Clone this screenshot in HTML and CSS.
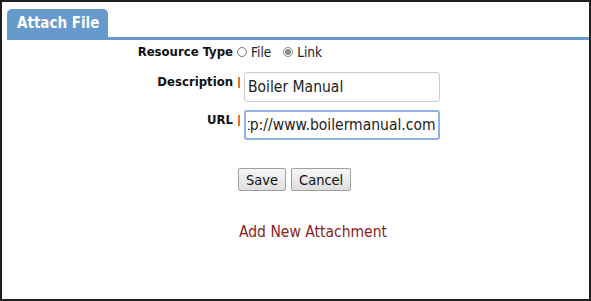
FILE: index.html
```html
<!DOCTYPE html>
<html lang="en">
<head>
  <meta charset="UTF-8">
  <title>Attach File</title>
  <link rel="stylesheet" href="styles.css">
</head>
<body>
  <div class="frame">
    <div class="tabs">
      <div class="tab">Attach File</div>
    </div>

    <div class="form">
      <div class="label first">Resource Type</div>
      <div class="field radios">
        <label><input type="radio" name="type"> File</label>
        <label><input type="radio" name="type" checked> Link</label>
      </div>

      <div class="label">Description</div>
      <div class="field">
        <span class="req"></span>
        <input class="text" type="text" value="Boiler Manual">
      </div>

      <div class="label">URL</div>
      <div class="field">
        <span class="req"></span>
        <input class="text focused" id="url" type="text" value="http://www.boilermanual.com" spellcheck="false">
      </div>

      <div></div>
      <div class="buttons">
        <button class="btn">Save</button>
        <button class="btn">Cancel</button>
      </div>

      <div></div>
      <a class="add-link" href="#">Add New Attachment</a>
    </div>
  </div>

  <script src="script.js"></script>
</body>
</html>
```

FILE: styles.css
```css
html, body {
  margin: 0;
  padding: 0;
  background: #fff;
}

body {
  font-family: Tahoma, "DejaVu Sans Condensed", "DejaVu Sans", sans-serif;
  color: #222;
}

.frame {
  width: 591px;
  height: 301px;
  box-sizing: border-box;
  border: 2px solid #1e1e1e;
}

.tabs {
  margin: 7px 0 0 5px;
  border-bottom: 3px solid #6699cc;
}

.tab {
  display: inline-block;
  width: 101px;
  height: 28px;
  line-height: 28px;
  box-sizing: border-box;
  padding-left: 10px;
  background: #6699cc;
  border-radius: 5px 5px 0 0;
  color: #fff;
  font-weight: bold;
  font-size: 15px;
}

.form {
  display: grid;
  grid-template-columns: 231px 340px;
  column-gap: 3px;
  align-items: start;
  padding-top: 3px;
}

.label {
  text-align: right;
  font-weight: bold;
  font-size: 13px;
  line-height: 16px;
  padding-top: 2px;
  color: #111;
}

.label.first {
  padding-top: 1px;
}

.field {
  display: flex;
  align-items: flex-start;
  margin-bottom: 8px;
}

.radios {
  font-size: 13.5px;
  line-height: 18px;
  gap: 11px;
  margin-bottom: 11px;
}

.radios label {
  display: flex;
  align-items: center;
  color: #222;
}

.radios input {
  margin: 0 4px 0 1px;
  width: 10px;
  height: 10px;
  accent-color: #8a8a8a;
}

.req {
  width: 2px;
  height: 11px;
  margin: 5px 4px 0 2px;
  background: #e8741c;
}

.text {
  width: 196px;
  height: 30px;
  box-sizing: border-box;
  border: 1px solid #ccc;
  border-radius: 3px;
  padding: 0 3px;
  font-family: inherit;
  font-size: 15.5px;
  color: #222;
  outline: none;
}

.text.focused {
  border: 2px solid #8fb1e6;
  padding: 0 2px;
}

.buttons {
  display: flex;
  gap: 5px;
  margin-top: 20px;
  margin-left: 2px;
}

.btn {
  height: 23px;
  padding: 0 7px;
  font-family: inherit;
  font-size: 14.5px;
  color: #111;
  background: linear-gradient(#f6f6f6, #dedede);
  border: 1px solid #a0a0a0;
  border-radius: 2px;
}

.add-link {
  margin-top: 32px;
  margin-left: 3px;
  color: #8b2323;
  font-size: 15.5px;
  text-decoration: none;
}
```

FILE: script.js
```js
// show the end of the URL, as the field does after typing
const url = document.getElementById('url');
url.scrollLeft = url.scrollWidth;
```
